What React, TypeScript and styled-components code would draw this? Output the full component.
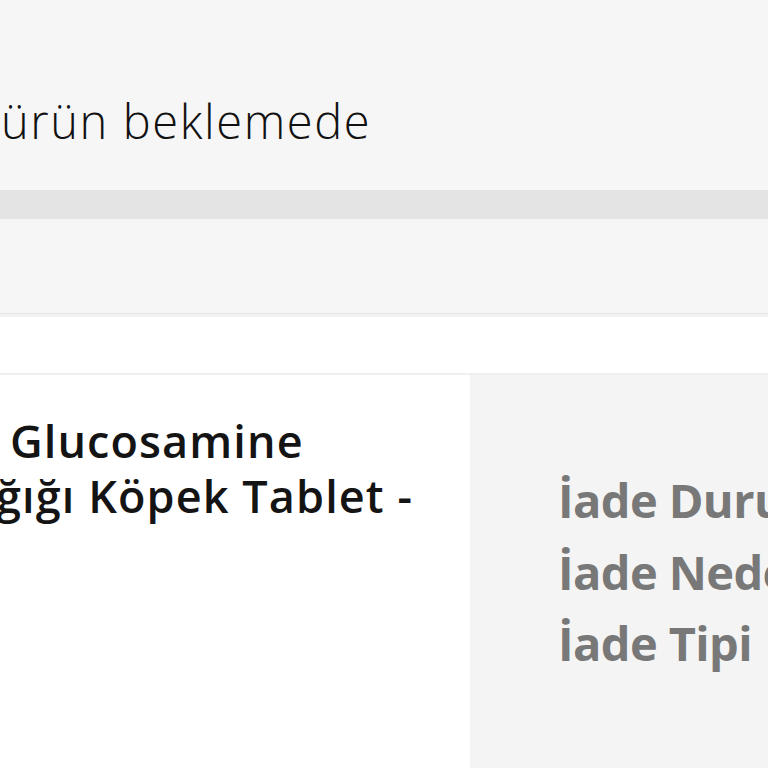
import React from "react";
import styled, { createGlobalStyle } from "styled-components";

const GlobalStyle = createGlobalStyle`
  html, body {
    margin: 0;
    padding: 0;
    background: #ffffff;
  }
  body {
    font-family: "Open Sans", "Liberation Sans", sans-serif;
  }
`;

const Page = styled.div`
  width: 768px;
  height: 768px;
  overflow: hidden;
  display: flex;
  flex-direction: column;
  background: #ffffff;
`;

const Summary = styled.section`
  height: 190px;
  box-sizing: border-box;
  padding: 89px 0 0 1px;
  background: #f6f6f6;
`;

const SummaryText = styled.div`
  font-size: 47px;
  line-height: 64px;
  font-weight: 300;
  letter-spacing: 1.6px;
  color: #111111;
  white-space: nowrap;
`;

const Band = styled.div`
  height: 29px;
  background: #e4e4e4;
`;

const Toolbar = styled.div`
  height: 94px;
  background: #f6f6f6;
  border-bottom: 1px solid #e6e6e6;
`;

const Spacer = styled.div`
  height: 56px;
  background: #ffffff;
  border-top: 3px solid #f3f3f3;
  border-bottom: 2px solid #efefef;
`;

const ItemRow = styled.div`
  flex: 1;
  display: grid;
  grid-template-columns: 470px 1fr;
`;

const ProductCell = styled.div`
  background: #ffffff;
  padding-top: 38px;
  overflow: hidden;
`;

const Title = styled.h3`
  margin: 0 0 0 -4px;
  font-size: 45px;
  line-height: 55px;
  font-weight: 600;
  letter-spacing: 1.1px;
  color: #141414;
  white-space: nowrap;
`;

const TitleLine = styled.span<{ $indent?: number }>`
  display: block;
  padding-left: ${(p) => p.$indent ?? 0}px;
`;

const DetailCell = styled.div`
  background: #f4f4f4;
  padding: 90px 0 0 88px;
  overflow: hidden;
`;

const DetailLine = styled.div`
  font-size: 47px;
  line-height: 71.5px;
  font-weight: 700;
  letter-spacing: -0.6px;
  color: #787878;
  white-space: nowrap;
`;

export default function App() {
  return (
    <>
      <GlobalStyle />
      <Page>
        <Summary>
          <SummaryText>ürün beklemede</SummaryText>
        </Summary>
        <Band />
        <Toolbar />
        <Spacer />
        <ItemRow>
          <ProductCell>
            <Title>
              <TitleLine $indent={14}>Glucosamine</TitleLine>
              <TitleLine>ğığı Köpek Tablet -</TitleLine>
            </Title>
          </ProductCell>
          <DetailCell>
            <DetailLine>İade Durumu</DetailLine>
            <DetailLine>İade Nedeni</DetailLine>
            <DetailLine>İade Tipi</DetailLine>
          </DetailCell>
        </ItemRow>
      </Page>
    </>
  );
}
